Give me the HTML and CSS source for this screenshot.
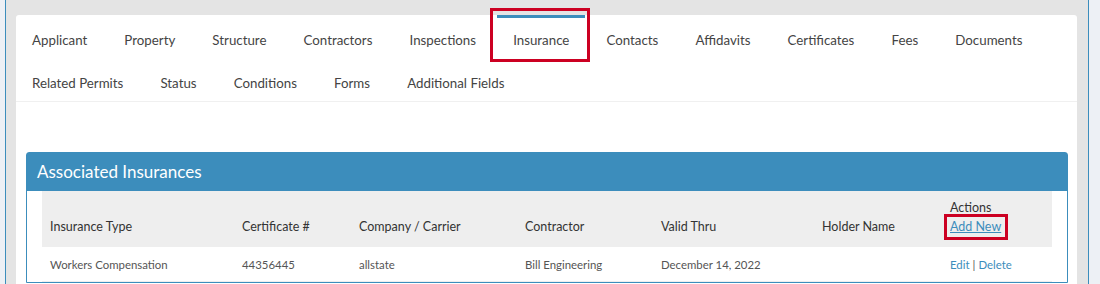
FILE: index.html
```html
<!DOCTYPE html>
<html>
<head>
<meta charset="utf-8">
<link rel="stylesheet" href="styles.css">
</head>
<body>
<div class="frame">
  <div class="card">
    <ul class="tabs">
      <li class="tab">Applicant</li>
      <li class="tab">Property</li>
      <li class="tab">Structure</li>
      <li class="tab">Contractors</li>
      <li class="tab">Inspections</li>
      <li class="tab active">Insurance</li>
      <li class="tab">Contacts</li>
      <li class="tab">Affidavits</li>
      <li class="tab">Certificates</li>
      <li class="tab">Fees</li>
      <li class="tab">Documents</li>
      <li class="tab">Related Permits</li>
      <li class="tab">Status</li>
      <li class="tab">Conditions</li>
      <li class="tab">Forms</li>
      <li class="tab">Additional Fields</li>
    </ul>
    <div class="content">
      <div class="panel">
        <div class="panel-head">Associated Insurances</div>
        <div class="panel-body">
          <table class="grid">
            <thead>
              <tr>
                <th class="c1">Insurance Type</th>
                <th class="c2">Certificate #</th>
                <th class="c3">Company / Carrier</th>
                <th class="c4">Contractor</th>
                <th class="c5">Valid Thru</th>
                <th class="c6">Holder Name</th>
                <th class="c7">Actions<br><span class="addnew"><a href="#">Add New</a></span></th>
              </tr>
            </thead>
            <tbody>
              <tr>
                <td>Workers Compensation</td>
                <td>44356445</td>
                <td>allstate</td>
                <td>Bill Engineering</td>
                <td>December 14, 2022</td>
                <td></td>
                <td><a href="#">Edit</a><span class="sep">|</span><a href="#">Delete</a></td>
              </tr>
            </tbody>
          </table>
        </div>
      </div>
    </div>
  </div>
</div>
</body>
</html>
```
FILE: styles.css
```css
html, body {
  margin: 0;
  padding: 0;
}
body {
  background: #edf0f5;
  font-family: "Lato", "Liberation Sans", sans-serif;
}
.frame {
  margin-left: 5px;
  width: 1084px;
  height: 284px;
  box-sizing: border-box;
  overflow: hidden;
  background: #e4e4e4;
  border-left: 1px solid #3c8dbc;
  border-right: 1px solid #3c8dbc;
  padding: 15px 11px 0 10px;
}
.card {
  background: #fff;
  border-radius: 3px 3px 0 0;
  height: 269px;
}
.tabs {
  list-style: none;
  margin: 0;
  padding: 0;
  display: flex;
  flex-wrap: wrap;
  border-bottom: 1px solid #f0f0f0;
}
.tab {
  position: relative;
  padding: 12px 16px 8px;
  margin-right: 5.1px;
  border-top: 3px solid transparent;
  font-size: 13.3px;
  line-height: 20px;
  color: #444;
  white-space: nowrap;
}
.tab.active {
  border-top-color: #3c8dbc;
}
.tab.active::after {
  content: "";
  position: absolute;
  left: -7px;
  right: -5px;
  top: -10px;
  bottom: -4px;
  border: 3px solid #cc0022;
}
.content {
  padding: 50px 9px 0 10px;
}
.panel {
  border: 1px solid #3c8dbc;
  border-radius: 3px 3px 0 0;
}
.panel-head {
  background: #3c8dbc;
  color: #fff;
  font-size: 17px;
  line-height: 24px;
  padding: 7px 10px;
}
.panel-body {
  padding: 0 15px;
}
.grid {
  width: 100%;
  border-collapse: collapse;
  font-size: 12.5px;
}
.grid th {
  background: #eeeeee;
  color: #333;
  font-weight: normal;
  text-align: left;
  vertical-align: bottom;
  line-height: 19px;
  padding: 7px 8px 11px;
}
.grid td {
  color: #555;
  font-size: 11.4px;
  line-height: 18px;
  padding: 9px 8px 7px;
  border-bottom: 1px solid #eee;
}
.c1 { width: 176px; }
.c2 { width: 101px; }
.c3 { width: 150px; }
.c4 { width: 120px; }
.c5 { width: 145px; }
.c6 { width: 112px; }
a {
  color: #3c8dbc;
  text-decoration: none;
}
.addnew {
  position: relative;
  display: inline-block;
}
.addnew a {
  text-decoration: underline;
}
.addnew::after {
  content: "";
  position: absolute;
  left: -6px;
  right: -7px;
  top: -3px;
  bottom: -4px;
  border: 3px solid #cc0022;
}
.sep {
  color: #555;
  margin: 0 3px;
}
```
